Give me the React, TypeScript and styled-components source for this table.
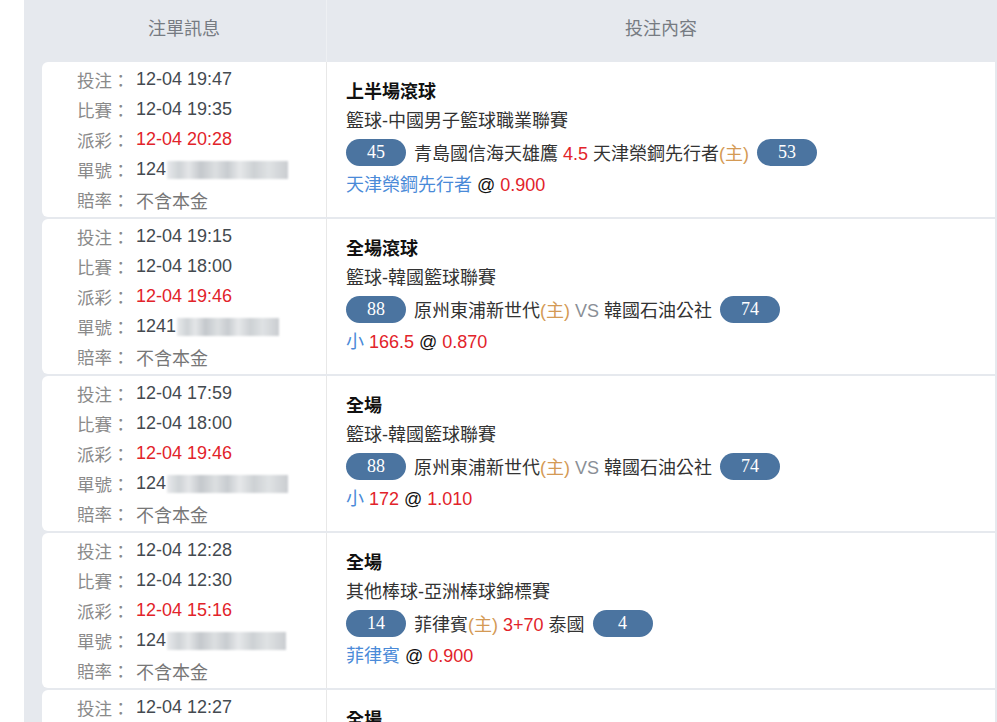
import React from "react";
import styled, { createGlobalStyle } from "styled-components";

type Part = { text: string; tone?: "red" | "blue" | "orange" | "grey" | "dark" };

type Bet = {
  placed: string;
  match: string;
  payout: string;
  orderHead: string;
  blurWidth: number;
  title: string;
  league: string;
  homeScore: string;
  awayScore: string;
  line: Part[];
  pick: Part[];
};

const bets: Bet[] = [
  {
    placed: "12-04 19:47",
    match: "12-04 19:35",
    payout: "12-04 20:28",
    orderHead: "124",
    blurWidth: 121,
    title: "上半場滾球",
    league: "籃球-中國男子籃球職業聯賽",
    homeScore: "45",
    awayScore: "53",
    line: [
      { text: "青島國信海天雄鷹 " },
      { text: "4.5", tone: "red" },
      { text: " 天津榮鋼先行者" },
      { text: "(主)", tone: "orange" },
    ],
    pick: [
      { text: "天津榮鋼先行者", tone: "blue" },
      { text: " @ ", tone: "dark" },
      { text: "0.900", tone: "red" },
    ],
  },
  {
    placed: "12-04 19:15",
    match: "12-04 18:00",
    payout: "12-04 19:46",
    orderHead: "1241",
    blurWidth: 102,
    title: "全場滾球",
    league: "籃球-韓國籃球聯賽",
    homeScore: "88",
    awayScore: "74",
    line: [
      { text: "原州東浦新世代" },
      { text: "(主)", tone: "orange" },
      { text: " VS ", tone: "grey" },
      { text: "韓國石油公社" },
    ],
    pick: [
      { text: "小", tone: "blue" },
      { text: " 166.5", tone: "red" },
      { text: " @ ", tone: "dark" },
      { text: "0.870", tone: "red" },
    ],
  },
  {
    placed: "12-04 17:59",
    match: "12-04 18:00",
    payout: "12-04 19:46",
    orderHead: "124",
    blurWidth: 121,
    title: "全場",
    league: "籃球-韓國籃球聯賽",
    homeScore: "88",
    awayScore: "74",
    line: [
      { text: "原州東浦新世代" },
      { text: "(主)", tone: "orange" },
      { text: " VS ", tone: "grey" },
      { text: "韓國石油公社" },
    ],
    pick: [
      { text: "小", tone: "blue" },
      { text: " 172", tone: "red" },
      { text: " @ ", tone: "dark" },
      { text: "1.010", tone: "red" },
    ],
  },
  {
    placed: "12-04 12:28",
    match: "12-04 12:30",
    payout: "12-04 15:16",
    orderHead: "124",
    blurWidth: 119,
    title: "全場",
    league: "其他棒球-亞洲棒球錦標賽",
    homeScore: "14",
    awayScore: "4",
    line: [
      { text: "菲律賓" },
      { text: "(主)", tone: "orange" },
      { text: " 3+70", tone: "red" },
      { text: " 泰國" },
    ],
    pick: [
      { text: "菲律賓", tone: "blue" },
      { text: " @ ", tone: "dark" },
      { text: "0.900", tone: "red" },
    ],
  },
  {
    placed: "12-04 12:27",
    match: "12-04 12:30",
    payout: "12-04 15:16",
    orderHead: "124",
    blurWidth: 119,
    title: "全場",
    league: "其他棒球-亞洲棒球錦標賽",
    homeScore: "14",
    awayScore: "4",
    line: [
      { text: "菲律賓" },
      { text: "(主)", tone: "orange" },
      { text: " 2+50", tone: "red" },
      { text: " 泰國" },
    ],
    pick: [
      { text: "菲律賓", tone: "blue" },
      { text: " @ ", tone: "dark" },
      { text: "0.900", tone: "red" },
    ],
  },
];

const App: React.FC = () => {
  return (
    <>
      <GlobalStyle />
      <Page>
        <Board>
          <HeaderRow>
            <HeaderCell $divider>注單訊息</HeaderCell>
            <HeaderCell>投注內容</HeaderCell>
          </HeaderRow>
          {bets.map((bet, index) => (
            <BetRow key={index}>
              <InfoCell>
                <InfoLine>
                  <Label>投注：</Label>
                  <Value>{bet.placed}</Value>
                </InfoLine>
                <InfoLine>
                  <Label>比賽：</Label>
                  <Value>{bet.match}</Value>
                </InfoLine>
                <InfoLine>
                  <Label>派彩：</Label>
                  <Value $red>{bet.payout}</Value>
                </InfoLine>
                <InfoLine>
                  <Label>單號：</Label>
                  <Value>{bet.orderHead}</Value>
                  <Blurred style={{ width: bet.blurWidth }} />
                </InfoLine>
                <InfoLine>
                  <Label>賠率：</Label>
                  <Value $muted>不含本金</Value>
                </InfoLine>
              </InfoCell>
              <ContentCell>
                <Title>{bet.title}</Title>
                <League>{bet.league}</League>
                <MatchLine>
                  <Score>{bet.homeScore}</Score>
                  <Teams>
                    {bet.line.map((part, i) => (
                      <Tone key={i} $tone={part.tone}>
                        {part.text}
                      </Tone>
                    ))}
                  </Teams>
                  <Score>{bet.awayScore}</Score>
                </MatchLine>
                <Pick>
                  {bet.pick.map((part, i) => (
                    <Tone key={i} $tone={part.tone}>
                      {part.text}
                    </Tone>
                  ))}
                </Pick>
              </ContentCell>
            </BetRow>
          ))}
        </Board>
      </Page>
    </>
  );
};

const GlobalStyle = createGlobalStyle`
  html, body {
    margin: 0;
    padding: 0;
    background: #ffffff;
    height: 722px;
    overflow: hidden;
  }
  body {
    font-family: "Liberation Sans", "Noto Sans CJK TC", sans-serif;
  }
`;

const Page = styled.div`
  padding-left: 24px;
`;

const Board = styled.div`
  background-color: #e6e9ee;
  padding: 0 2px 0 18px;
`;

const HeaderRow = styled.div`
  display: grid;
  grid-template-columns: 285px 1fr;
  height: 62px;
`;

const HeaderCell = styled.div<{ $divider?: boolean }>`
  display: flex;
  align-items: center;
  justify-content: center;
  font-size: 18px;
  color: #767b82;
  border-right: ${(p) => (p.$divider ? "1px solid #eef0f3" : "none")};
  padding-bottom: 8px;
`;

const BetRow = styled.div`
  display: grid;
  grid-template-columns: 285px 1fr;
  height: 155px;
  margin-bottom: 2px;
  background-color: #ffffff;
  border-radius: 6px 0 0 6px;
`;

const InfoCell = styled.div`
  display: flex;
  flex-direction: column;
  justify-content: center;
  padding-left: 35px;
  border-right: 1px solid #e8e8e8;
`;

const InfoLine = styled.div`
  display: flex;
  align-items: center;
  height: 30px;
  font-size: 17.5px;
`;

const Label = styled.span`
  color: #8a8a8a;
  width: 59px;
`;

const Value = styled.span<{ $red?: boolean; $muted?: boolean }>`
  color: ${(p) => (p.$red ? "#e2232a" : p.$muted ? "#777777" : "#444a50")};
  font-size: 18px;
`;

const Blurred = styled.span`
  display: inline-block;
  height: 18px;
  margin-left: 1px;
  background: linear-gradient(
    90deg,
    #e8eaec 0%,
    #cfd3d6 10%,
    #e4e6e8 18%,
    #c4c8cc 28%,
    #dcdfe1 40%,
    #c8ccd0 50%,
    #e6e8ea 60%,
    #cdd1d4 72%,
    #dfe2e4 84%,
    #cacdd1 100%
  );
  filter: blur(0.8px);
`;

const ContentCell = styled.div`
  display: flex;
  flex-direction: column;
  justify-content: center;
  padding-left: 19px;
  padding-bottom: 1px;
  color: #333333;
  font-size: 18px;
`;

const Title = styled.div`
  font-weight: bold;
  color: #111111;
  line-height: 30px;
`;

const League = styled.div`
  color: #333333;
  line-height: 28px;
`;

const MatchLine = styled.div`
  display: flex;
  align-items: center;
  gap: 8px;
  height: 34px;
`;

const Teams = styled.span`
  color: #333333;
`;

const Score = styled.span`
  display: inline-flex;
  align-items: center;
  justify-content: center;
  width: 60px;
  height: 27px;
  border-radius: 14px;
  background-color: #4b74a0;
  color: #ffffff;
  font-family: "Liberation Serif", "DejaVu Serif", serif;
  font-size: 18px;
`;

const Pick = styled.div`
  line-height: 32px;
`;

const toneColors: Record<string, string> = {
  red: "#e2232a",
  blue: "#4a8ad8",
  orange: "#d49a55",
  grey: "#8a8f96",
  dark: "#111111",
};

const Tone = styled.span<{ $tone?: string }>`
  color: ${(p) => (p.$tone ? toneColors[p.$tone] : "inherit")};
`;

export default App;
